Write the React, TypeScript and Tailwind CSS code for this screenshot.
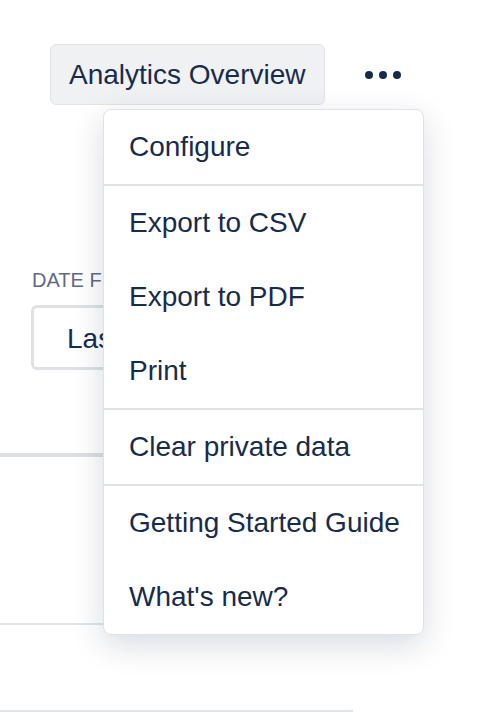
import React from 'react';

const groups: string[][] = [
  ['Configure'],
  ['Export to CSV', 'Export to PDF', 'Print'],
  ['Clear private data'],
  ['Getting Started Guide', "What's new?"],
];

export default function App() {
  return (
    <div className="relative w-[494px] h-[716px] overflow-hidden bg-white text-[#172b4d] font-['Liberation_Sans',Arial,sans-serif]">
      {/* Header */}
      <div className="flex items-center pt-[44px] pl-[50px]">
        <button className="h-[61px] px-[18px] rounded-[6px] border border-[#e1e3e8] bg-[#f0f1f3] text-[28px] leading-[32px] text-[#172b4d]">
          Analytics Overview
        </button>
        <div className="ml-[40px] flex items-center gap-[6px]">
          <span className="w-[8px] h-[8px] rounded-full bg-[#172b4d]" />
          <span className="w-[8px] h-[8px] rounded-full bg-[#172b4d]" />
          <span className="w-[8px] h-[8px] rounded-full bg-[#172b4d]" />
        </div>
      </div>

      {/* Page content under the menu */}
      <div className="mt-[163px] pl-[32px] text-[20px] leading-[24px] text-[#5e6c84] uppercase">
        Date filter
      </div>
      <div className="mt-[13px] ml-[31px] w-[240px] h-[65px] rounded-[6px] border-[3px] border-[#dfe1e6] pl-[33px] pt-[2px] flex items-center text-[28px] leading-[32px] text-[#172b4d]">
        Last 30 days
      </div>
      <div className="mt-[83px] w-[380px] h-[4px] bg-[#dcdfe4]" />
      <div className="mt-[166px] w-[380px] h-[2px] bg-[#dfe5ef]" />
      <div className="mt-[85px] w-[353px] h-[2px] bg-[#dfe5ef]" />

      {/* Dropdown menu */}
      <div className="absolute left-[103px] top-[109px] w-[321px] rounded-[8px] border border-[#dfe1e6] bg-white shadow-[0_10px_32px_rgba(9,30,66,0.16)]">
        {groups.map((items, gi) => (
          <div key={gi} className={gi > 0 ? 'border-t-2 border-[#dfe1e6]' : ''}>
            {items.map((label) => (
              <div key={label} className="h-[74px] flex items-center pl-[25px] text-[28px] leading-[32px] text-[#172b4d]">
                {label}
              </div>
            ))}
          </div>
        ))}
      </div>
    </div>
  );
}
